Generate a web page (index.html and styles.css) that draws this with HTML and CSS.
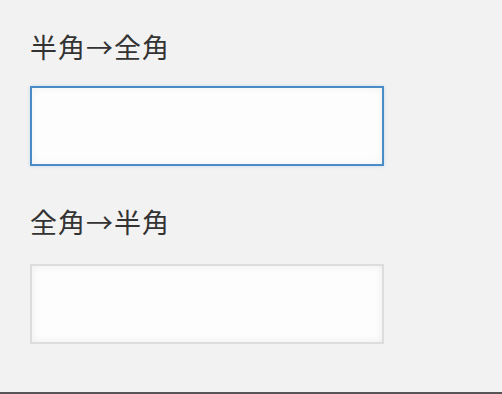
FILE: index.html
```html
<!DOCTYPE html>
<html lang="ja">
<head>
<meta charset="utf-8">
<link rel="stylesheet" href="styles.css">
</head>
<body>
<div class="page">
  <div class="field field-first">
    <label class="label" for="a">半角→全角</label>
    <input id="a" class="input input-focus" type="text">
  </div>
  <div class="field field-second">
    <label class="label" for="b">全角→半角</label>
    <input id="b" class="input" type="text">
  </div>
</div>
</body>
</html>
```
FILE: styles.css
```css
html, body {
  margin: 0;
  padding: 0;
}
body {
  width: 502px;
  height: 394px;
  background: #f2f2f2;
  font-family: "Noto Sans CJK JP", "Noto Sans", sans-serif;
  box-sizing: border-box;
  border-bottom: 2px solid #555;
  overflow: hidden;
}
.page {
  padding: 29px 0 0 30px;
  display: flex;
  flex-direction: column;
  gap: 38px;
}
.field {
  display: flex;
  flex-direction: column;
}
.field-first {
  gap: 21px;
}
.field-second {
  gap: 24px;
}
.label {
  font-size: 27px;
  line-height: 36px;
  letter-spacing: 1px;
  color: #333;
}
.input {
  box-sizing: border-box;
  width: 354px;
  height: 80px;
  margin: 0;
  border: 2px solid #ddd;
  background: #fdfdfd;
  box-shadow: inset 0 0 8px rgba(0,0,0,0.07);
  outline: none;
}
.input-focus {
  border-color: #4a8cc6;
  box-shadow: inset 0 0 8px rgba(0,0,0,0.05), 0 0 3px rgba(120,180,230,0.4);
}
```
